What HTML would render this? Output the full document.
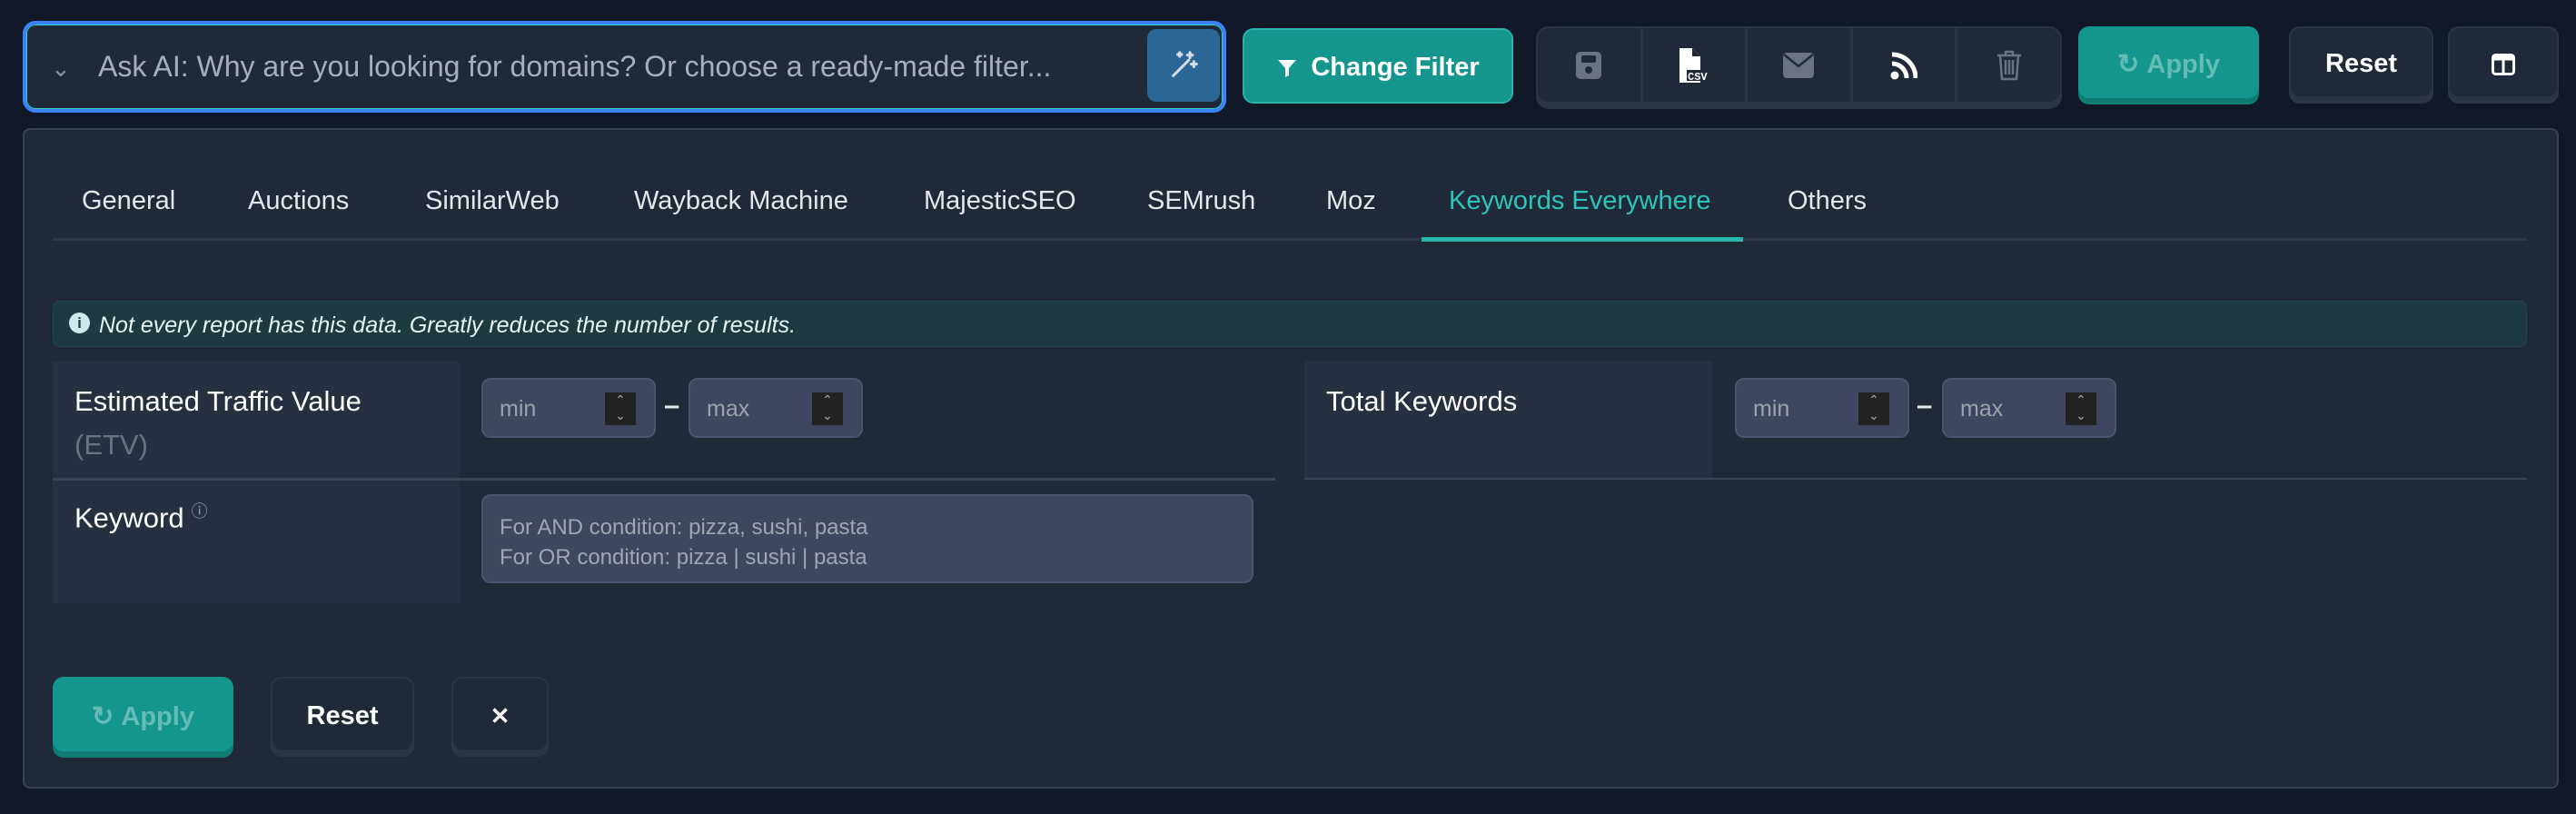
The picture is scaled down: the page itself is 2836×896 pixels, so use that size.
<!DOCTYPE html>
<html><head><meta charset="utf-8"><style>
*{box-sizing:border-box;margin:0;padding:0}
body{width:2836px;height:896px;background:#111827;font-family:"Liberation Sans",sans-serif;position:relative;overflow:hidden;color:#e5e7eb}
.a{position:absolute}
.btn{position:absolute;border-radius:12px;display:flex;align-items:center;justify-content:center;font-size:29px;font-weight:bold;padding-top:4px}
.dark{background:#1f2937;border:2px solid #2b3442;box-shadow:0 6px 0 #2c3544;color:#fff}
.teal{background:#14958e;box-shadow:0 7px 0 #0f7c76;color:#63bcb6}
.tab{position:absolute;top:205px;font-size:29px;color:#e5e7eb}
.inp{position:absolute;background:#3f4660;border:2px solid #4b5470;border-radius:10px;height:66px;width:192px;font-size:25px;color:#9ca3af;padding:2px 0 0 18px;display:flex;align-items:center}
.spin{position:absolute;right:20px;top:14px;width:34px;height:36px;background:#222;color:#aaa;font-size:14px;line-height:17px;text-align:center}
.lab{position:absolute;background:#273040;font-size:31px;color:#fff;padding:26px 0 0 24px}
</style></head><body>
<div class="a" style="left:25px;top:23px;width:1325px;height:101px;border:4px solid #3b82f6;border-radius:14px;background:#1f2937;box-shadow:0 0 0 1px #2dd4bf inset"></div>
<div class="a" style="left:56px;top:60px;font-size:26px;color:#8a93a3">&#8964;</div>
<div class="a" style="left:108px;top:55px;font-size:32px;color:#a8afbb">Ask AI: Why are you looking for domains? Or choose a ready-made filter...</div>
<div class="a" style="left:1263px;top:32px;width:80px;height:80px;background:#2a6797;border-radius:10px;display:flex;align-items:center;justify-content:center">
<svg width="34" height="34" viewBox="0 0 24 24" fill="none" stroke="#d6dce5" stroke-width="2.2" stroke-linecap="round"><path d="M4 20L16 8"/><path d="M17 2v4M15 4h4M20 9v4M18 11h4M9 2v3M7.5 3.5h3"/></svg></div>
<div class="btn" style="left:1368px;top:31px;width:298px;height:83px;background:#14958e;border:2px solid #2ab3ab;color:#fff"><svg width="24" height="24" viewBox="0 0 24 24" style="margin-right:14px"><path d="M2 3h20l-8 9v8l-4 2V12z" fill="#fff"/></svg>Change Filter</div>
<div class="a" style="left:1691px;top:29px;width:579px;height:85px;background:#1f2937;border:2px solid #2b3442;border-radius:14px;box-shadow:0 6px 0 #2c3544;display:flex">
<div style="flex:1;border-right:3px solid #2b3442;display:flex;align-items:center;justify-content:center"><svg width="30" height="32" viewBox="0 0 30 32"><rect x="1" y="1" width="28" height="30" rx="5" fill="#6b7280"/><rect x="7" y="5" width="16" height="8" rx="2" fill="#1f2937"/><circle cx="15" cy="21" r="4" fill="#1f2937"/></svg></div>
<div style="flex:1;border-right:3px solid #2b3442;display:flex;align-items:center;justify-content:center"><svg width="34" height="38" viewBox="0 0 34 38"><path d="M1 0h14l9 9v29H1z" fill="#fff"/><path d="M15 0v9h9" fill="#1f2937"/><rect x="9" y="24" width="25" height="12" fill="#1f2937"/><text x="10" y="35" font-size="12" font-weight="bold" fill="#fff" font-family="Liberation Mono">CSV</text></svg></div>
<div style="flex:1;border-right:3px solid #2b3442;display:flex;align-items:center;justify-content:center"><svg width="34" height="28" viewBox="0 0 34 28"><rect width="34" height="28" rx="4" fill="#6b7280"/><path d="M1 2l16 13L33 2" stroke="#1f2937" stroke-width="2.5" fill="none"/></svg></div>
<div style="flex:1;border-right:3px solid #2b3442;display:flex;align-items:center;justify-content:center"><svg width="30" height="32" viewBox="0 0 30 32"><circle cx="5" cy="27" r="4.5" fill="#fff"/><path d="M2 14a16 16 0 0 1 16 16M2 4a26 26 0 0 1 26 26" stroke="#fff" stroke-width="5" fill="none"/></svg></div>
<div style="flex:1;display:flex;align-items:center;justify-content:center"><svg width="28" height="34" viewBox="0 0 28 34" fill="none" stroke="#6b7280" stroke-width="2.5"><path d="M1 6h26M10 6V2h8v4M4 6l2 26h16l2-26M10 11v16M14 11v16M18 11v16"/></svg></div>
</div>
<div class="btn teal" style="left:2288px;top:29px;width:199px;height:79px">&#8635;&nbsp;Apply</div>
<div class="btn dark" style="left:2520px;top:29px;width:159px;height:79px">Reset</div>
<div class="btn dark" style="left:2695px;top:29px;width:122px;height:79px"><svg width="26" height="24" viewBox="0 0 26 24"><rect x="1.5" y="1.5" width="23" height="21" rx="3" fill="none" stroke="#fff" stroke-width="3"/><rect x="1.5" y="1.5" width="23" height="6" fill="#fff"/><path d="M13 6v16" stroke="#fff" stroke-width="3"/></svg></div>
<div class="a" style="left:25px;top:141px;width:2792px;height:727px;background:#1f2937;border:2px solid #374151;border-radius:8px"></div>
<div class="a" style="left:58px;top:262px;width:2724px;height:3px;background:#2e3746"></div>
<div class="a" style="left:1565px;top:261px;width:354px;height:5px;background:#2bb5ad"></div>
<div class="tab" style="left:90px">General</div>
<div class="tab" style="left:273px">Auctions</div>
<div class="tab" style="left:468px">SimilarWeb</div>
<div class="tab" style="left:698px">Wayback Machine</div>
<div class="tab" style="left:1017px">MajesticSEO</div>
<div class="tab" style="left:1263px">SEMrush</div>
<div class="tab" style="left:1460px">Moz</div>
<div class="tab" style="left:1595px;color:#2ec4bb">Keywords Everywhere</div>
<div class="tab" style="left:1968px">Others</div>
<div class="a" style="left:58px;top:331px;width:2724px;height:51px;background:#1c3a40;border:1px solid #22494e;border-radius:8px;font-size:25px;font-style:italic;color:#e5f6f5;padding:12px 0 0 50px">Not every report has this data. Greatly reduces the number of results.</div>
<div class="a" style="left:76px;top:344px;width:23px;height:23px;border-radius:50%;background:#cde9ec;color:#1c3a40;font-size:17px;font-weight:bold;text-align:center;line-height:23px">i</div>
<div class="lab" style="left:58px;top:398px;width:448px;height:128px">Estimated Traffic Value<div style="color:#6b7280;margin-top:12px">(ETV)</div></div>
<div class="inp" style="left:530px;top:416px">min<div class="spin">&#8963;<br>&#8964;</div></div>
<div class="a" style="left:731px;top:428px;font-size:31px;font-weight:bold">&#8211;</div>
<div class="inp" style="left:758px;top:416px">max<div class="spin">&#8963;<br>&#8964;</div></div>
<div class="a" style="left:58px;top:526px;width:1346px;height:3px;background:#3a4351"></div>
<div class="lab" style="left:1436px;top:398px;width:449px;height:128px">Total Keywords</div>
<div class="inp" style="left:1910px;top:416px">min<div class="spin">&#8963;<br>&#8964;</div></div>
<div class="a" style="left:2110px;top:428px;font-size:31px;font-weight:bold">&#8211;</div>
<div class="inp" style="left:2138px;top:416px">max<div class="spin">&#8963;<br>&#8964;</div></div>
<div class="a" style="left:1436px;top:526px;width:1346px;height:2px;background:#3a4351"></div>
<div class="lab" style="left:58px;top:529px;width:448px;height:135px;padding-top:20px">Keyword<sup style="font-size:18px;color:#9ca3af;margin-left:8px">&#9432;</sup></div>
<div class="a" style="left:530px;top:544px;width:850px;height:98px;background:#3f4660;border:2px solid #4b5470;border-radius:10px;font-size:24px;color:#a0a6b4;padding:18px 0 0 18px;line-height:33px">For AND condition: pizza, sushi, pasta<br>For OR condition: pizza | sushi | pasta</div>
<div class="btn teal" style="left:58px;top:745px;width:199px;height:82px">&#8635;&nbsp;Apply</div>
<div class="btn dark" style="left:298px;top:745px;width:158px;height:82px;background:#1f2937">Reset</div>
<div class="btn dark" style="left:497px;top:745px;width:107px;height:82px;font-size:26px">&#10005;</div>
</body></html>
